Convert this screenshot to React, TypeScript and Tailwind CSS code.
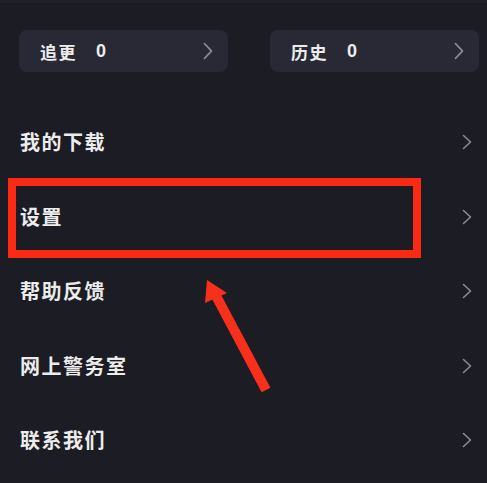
import React from "react";

const Chevron = ({ h = 16 }: { h?: number }) => (
  <svg width="10" height={h} viewBox="0 0 10 16" preserveAspectRatio="none" fill="none">
    <path d="M1.5 1.5 L8.5 8 L1.5 14.5" stroke="#8b8b96" strokeWidth="1.6" strokeLinecap="round" strokeLinejoin="round" />
  </svg>
);

const items = ["我的下载", "设置", "帮助反馈", "网上警务室", "联系我们"];

export default function App() {
  return (
    <div
      className="relative w-[487px] h-[483px] overflow-hidden bg-[#1c1c24] text-[#ececec]"
      style={{ fontFamily: '"Noto Sans CJK SC", "Noto Sans", sans-serif' }}
    >
      <div className="h-[3px] bg-[#202028]" />
      <div className="flex gap-[42px] pl-[19px] pr-[8px] pt-[27px]">
        {["追更", "历史"].map((t) => (
          <div key={t} className="flex h-[42px] w-[209px] items-center rounded-[8px] bg-[#292935] pl-[21px] pr-[15px]">
            <span className="text-[17px] font-bold leading-none tracking-[1.5px]">{t}</span>
            <span className="ml-[19px] text-[18px] font-bold leading-none" style={{ fontFamily: '"Liberation Sans", sans-serif' }}>0</span>
            <div className="ml-auto flex items-center">
              <Chevron h={18} />
            </div>
          </div>
        ))}
      </div>
      <div className="mt-[33px] flex flex-col">
        {items.map((t) => (
          <div key={t} className="flex h-[74.5px] items-center pl-[20px] pr-[15px]">
            <span className="text-[20px] font-bold leading-none tracking-[1.5px]">{t}</span>
            <div className="ml-auto flex items-center">
              <Chevron />
            </div>
          </div>
        ))}
      </div>
      <div className="absolute left-[8px] top-[178px] h-[80px] w-[413px] border-[8px] border-[#fb2a14]" />
      <svg className="absolute left-0 top-0" width="487" height="483" viewBox="0 0 487 483">
        <line x1="214" y1="292" x2="266" y2="390" stroke="#f7301c" strokeWidth="10" strokeLinecap="butt" />
        <polygon points="207,280 227,293 205,303" fill="#f7301c" />
      </svg>
    </div>
  );
}
